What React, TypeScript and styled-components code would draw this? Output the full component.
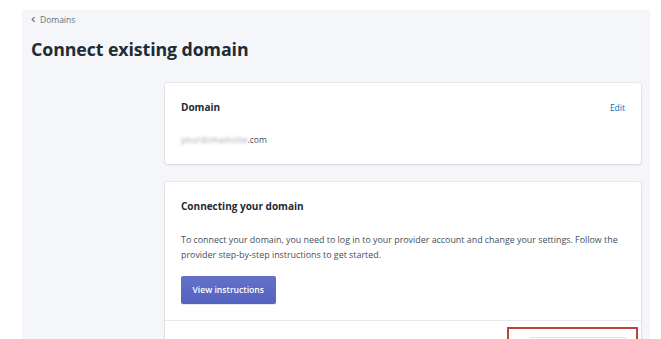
import styled, { createGlobalStyle } from "styled-components";

const GlobalStyle = createGlobalStyle`
  body {
    margin: 0;
    background: #ffffff;
    font-family: "Open Sans", "Noto Sans", sans-serif;
    color: #212b36;
  }
`;

const Page = styled.div`
  padding: 10px 11px 0 22px;
  height: 339px;
  box-sizing: border-box;
  overflow: hidden;
`;

const Panel = styled.div`
  background: #f5f6f9;
  height: 100%;
  padding: 3px 9px 0 8px;
  box-sizing: border-box;
`;

const BackLink = styled.a`
  display: flex;
  align-items: center;
  gap: 3px;
  height: 12px;
  font-size: 8.5px;
  color: #637381;
  text-decoration: none;
`;

const Title = styled.h1`
  margin: 12px 0 0 1px;
  height: 25px;
  line-height: 25px;
  font-size: 17.8px;
  font-weight: 700;
  letter-spacing: -0.1px;
  color: #212b36;
`;

const Column = styled.div`
  margin: 21px 0 0 135px;
  display: flex;
  flex-direction: column;
  gap: 18px;
`;

const Card = styled.section`
  background: #ffffff;
  border-radius: 3px;
  box-shadow: 0 0 0 1px rgba(63, 63, 68, 0.05), 0 1px 3px 0 rgba(63, 63, 68, 0.12);
`;

const Section = styled.div<{ $top?: string; $bottom?: string }>`
  padding: ${(p) => p.$top || "16px"} 16px ${(p) => p.$bottom || "16px"};
  & + & {
    border-top: 1px solid #e6e8eb;
  }
`;

const CardHeader = styled.div`
  display: flex;
  justify-content: space-between;
  align-items: center;
  height: 14px;
`;

const CardTitle = styled.h2`
  margin: 0;
  height: 14px;
  line-height: 14px;
  font-size: 10px;
  font-weight: 700;
  color: #212b36;
`;

const EditLink = styled.a`
  font-size: 8.5px;
  color: #006fbb;
  text-decoration: none;
`;

const DomainText = styled.p`
  margin: 20px 0 0;
  height: 12px;
  line-height: 12px;
  font-size: 8.5px;
  color: #454f5b;
`;

const Blurred = styled.span`
  filter: blur(1.4px);
  color: #9aa2ab;
  letter-spacing: 0.3px;
`;

const Text = styled.p`
  margin: 19px 0 0;
  font-size: 8.9px;
  line-height: 15px;
  color: #454f5b;
`;

const PrimaryButton = styled.button`
  display: block;
  margin-top: 14px;
  height: 28px;
  padding: 0 11.5px;
  border: none;
  border-radius: 2px;
  background: linear-gradient(180deg, #6371c7, #5563c1);
  box-shadow: 0 1px 0 0 rgba(22, 29, 37, 0.1);
  color: #ffffff;
  font-family: inherit;
  font-size: 8.6px;
  font-weight: 600;
`;

const FooterRow = styled.div`
  display: flex;
  justify-content: flex-end;
`;

const Highlight = styled.div`
  width: 131px;
  height: 30px;
  margin-right: -13px;
  margin-top: -10px;
  border: 2px solid #c2403a;
  box-sizing: border-box;
  padding: 8px 0 0 20px;
`;

const GhostButton = styled.div`
  width: 96px;
  height: 20px;
  border: 1px solid #dfe3e8;
  border-radius: 2px;
`;

export default function App() {
  return (
    <Page>
      <GlobalStyle />
      <Panel>
        <BackLink href="#">
          <svg width="7" height="7" viewBox="0 0 10 10">
            <path d="M6.5 1.5 L3 5 L6.5 8.5" stroke="#637381" strokeWidth="1.6" fill="none" />
          </svg>
          Domains
        </BackLink>
        <Title>Connect existing domain</Title>
        <Column>
          <Card>
            <Section $top="17px" $bottom="18px">
              <CardHeader>
                <CardTitle>Domain</CardTitle>
                <EditLink href="#">Edit</EditLink>
              </CardHeader>
              <DomainText>
                <Blurred>yourdomainsite</Blurred>.com
              </DomainText>
            </Section>
          </Card>
          <Card>
            <Section $top="17px" $bottom="16px">
              <CardTitle>Connecting your domain</CardTitle>
              <Text>
                To connect your domain, you need to log in to your provider account and change your settings. Follow the
                provider step-by-step instructions to get started.
              </Text>
              <PrimaryButton>View instructions</PrimaryButton>
            </Section>
            <Section $top="16px" $bottom="16px">
              <FooterRow>
                <Highlight>
                  <GhostButton />
                </Highlight>
              </FooterRow>
            </Section>
          </Card>
        </Column>
      </Panel>
    </Page>
  );
}
